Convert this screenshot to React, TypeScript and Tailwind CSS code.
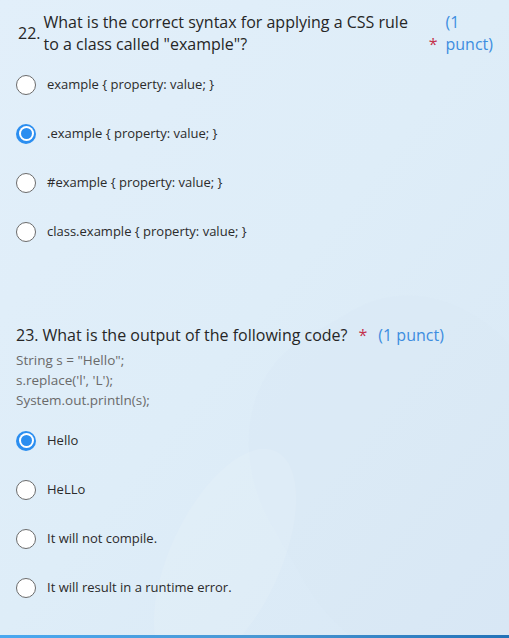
import React from 'react';

type Option = { label: string; checked?: boolean };

const q22: Option[] = [
  { label: 'example { property: value; }' },
  { label: '.example { property: value; }', checked: true },
  { label: '#example { property: value; }' },
  { label: 'class.example { property: value; }' },
];

const q23: Option[] = [
  { label: 'Hello', checked: true },
  { label: 'HeLLo' },
  { label: 'It will not compile.' },
  { label: 'It will result in a runtime error.' },
];

function Radio({ checked }: { checked?: boolean }) {
  if (checked) {
    return (
      <span className="flex h-[20px] w-[20px] shrink-0 items-center justify-center rounded-full bg-[#2b8ef0]">
        <span className="flex h-[15px] w-[15px] items-center justify-center rounded-full bg-white">
          <span className="h-[11px] w-[11px] rounded-full bg-[#2b8ef0]" />
        </span>
      </span>
    );
  }
  return <span className="h-[20px] w-[20px] shrink-0 rounded-full border border-[#6b6b6b] bg-white" />;
}

function Options({ items }: { items: Option[] }) {
  return (
    <div className="flex flex-col">
      {items.map((item) => (
        <div key={item.label} className="flex h-[49px] items-center gap-[11px] pl-[16px]">
          <Radio checked={item.checked} />
          <span className="text-[13px] text-[#2b2b2b]">{item.label}</span>
        </div>
      ))}
    </div>
  );
}

export default function App() {
  return (
    <div
      className="relative h-[638px] w-[509px] overflow-hidden bg-gradient-to-br from-[#e2effa] via-[#deedf8] to-[#d9e8f5]"
      style={{ fontFamily: '"Open Sans", "Noto Sans", sans-serif' }}
    >
      <div className="pointer-events-none absolute -right-[60px] top-[300px] h-[360px] w-[300px] rotate-[-30deg] rounded-[40%] bg-[#d5e6f4] opacity-20" />
      <div className="pointer-events-none absolute left-[170px] top-[440px] h-[240px] w-[110px] rotate-[25deg] rounded-[50%] bg-white opacity-10" />

      <div className="relative pt-[11px]">
        <div className="flex items-center pl-[18px] pr-[16px]">
          <span className="text-[16px] leading-[22px] text-[#262626]">22.</span>
          <div className="ml-[3px] w-[378px] text-[16px] leading-[22px] text-[#262626]">
            What is the correct syntax for applying a CSS rule to a class called "example"?
          </div>
          <div className="ml-auto flex items-end gap-[8px]">
            <span className="text-[16px] leading-[22px] text-[#c4314b]">*</span>
            <span className="text-[16px] leading-[22px] text-[#3d8de0]">
              (1
              <br />
              punct)
            </span>
          </div>
        </div>

        <div className="mt-[5px]">
          <Options items={q22} />
        </div>

        <div className="mt-[68px] px-[16px]">
          <div className="flex items-baseline text-[16px] leading-[22px]">
            <span className="text-[#262626]">23.</span>
            <span className="ml-[4px] text-[#262626]">What is the output of the following code?</span>
            <span className="ml-[11px] text-[#c4314b]">*</span>
            <span className="ml-[11px] text-[#3d8de0]">(1 punct)</span>
          </div>
          <div className="mt-[4px] text-[13.5px] leading-[20px] text-[#6a6a6a]">
            <div>String s = "Hello";</div>
            <div>s.replace('l', 'L');</div>
            <div>System.out.println(s);</div>
          </div>
        </div>

        <div className="mt-[6px]">
          <Options items={q23} />
        </div>
      </div>

      <div className="absolute bottom-0 left-0 h-[3px] w-full bg-gradient-to-r from-[#4aa8f0] via-[#4a98d4] to-[#2272b8]" />
    </div>
  );
}
